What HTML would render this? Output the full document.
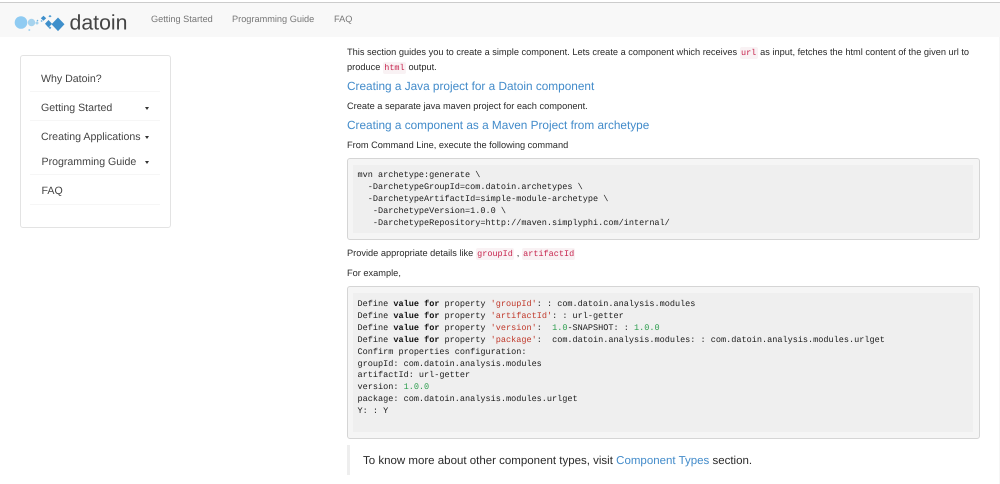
<!DOCTYPE html>
<html><head><meta charset="utf-8"><style>
html,body{margin:0;padding:0;background:#fff;width:1000px;height:484px;overflow:hidden}
body{position:relative;font-family:"Liberation Sans",sans-serif;color:#2a2a2a;text-rendering:geometricPrecision;filter:blur(.3px)}
.t{position:absolute;white-space:pre;font-size:9.24px;line-height:14px}
.n{color:#777;font-size:9.2px}
.s{color:#444;font-size:10.6px}
.h{color:#428bca;font-size:11.8px;line-height:16px}
code{font-family:"Liberation Mono",monospace;font-size:8.5px;color:#c7254e;background:#f9f2f4;padding:1px 1.3px;border-radius:2px}
pre{position:absolute;margin:0;font-family:"Liberation Mono",monospace;font-size:8.54px;line-height:11.9px;color:#1c1c1c}
.box{position:absolute;background:#f5f5f5;border:1px solid #d5d5d5;border-radius:3px;box-sizing:border-box}
.in{position:absolute;background:#efefef}
.k{font-weight:bold;color:#111}.r{color:#c0392b}.g{color:#2e9e4f}
.c{position:absolute;width:0;height:0;border-left:2.5px solid transparent;border-right:2.5px solid transparent;border-top:3px solid #333}
.l{position:absolute;height:1px;background:#f6f6f6;left:30px;width:130px}
</style></head><body>
<div style="position:absolute;left:0;top:0;width:1000px;height:3px;background:#fff;border-bottom:1px solid #ccc;box-sizing:border-box"></div>
<div style="position:absolute;left:0;top:3px;width:1000px;height:34px;background:#f8f8f8"></div>
<svg style="position:absolute;left:0;top:0" width="130" height="40" viewBox="0 0 130 40">
<circle cx="21" cy="22.500" r="6.300" fill="#8fcbf2"/><circle cx="31.500" cy="22.500" r="3.700" fill="#a6d3ee"/><circle cx="37" cy="23" r="1.500" fill="#a6d3ee"/><circle cx="29.300" cy="30" r="1" fill="#a6d3ee"/><circle cx="37.500" cy="20.500" r=".8" fill="#6fb2de"/><circle cx="41.600" cy="21" r=".9" fill="#6fb2de"/>
<path d="M58 17.500l6.500 6.800-6.500 6.800-6.500-6.800z" fill="#3e8fcb"/><path d="M48.500 20l3.500 3.800-3.500 3.800-3.500-3.800z" fill="#3e8fcb"/><path d="M43.500 15.700l2.700 2.500-2.700 2.500-2.700-2.500z" fill="#3e8fcb"/><path d="M50 15l1.600 1.200-1.600 1.200-1.600-1.200z" fill="#4a98d0"/><path d="M50 26.500l1.300 1.300-1.300 1.300-1.300-1.300z" fill="#4a98d0"/>
<text x="69.500" y="29.500" font-family="Liberation Sans" font-size="21" fill="#444" textLength="58" lengthAdjust="spacingAndGlyphs">datoin</text></svg>
<div class="t n" style="left:151px;top:12px">Getting Started</div>
<div class="t n" style="left:232px;top:12px">Programming Guide</div>
<div class="t n" style="left:334px;top:12px">FAQ</div>
<div style="position:absolute;left:20px;top:55px;width:151px;height:173px;border:1px solid #e3e3e3;border-radius:3px;box-sizing:border-box;background:#fff"></div>
<div class="t s" style="left:41px;top:72px">Why Datoin?</div><div class="l" style="top:91px"></div>
<div class="t s" style="left:41px;top:101px">Getting Started</div><div class="c" style="left:145px;top:107px"></div><div class="l" style="top:120px"></div>
<div class="t s" style="left:41px;top:130px">Creating Applications</div><div class="c" style="left:145px;top:136px"></div>
<div class="t s" style="left:41.500px;top:155px">Programming Guide</div><div class="c" style="left:144.500px;top:161px"></div><div class="l" style="top:174px"></div>
<div class="t s" style="left:41.500px;top:184px">FAQ</div><div class="l" style="top:204px"></div>
<div class="t" style="left:347px;top:45px">This section guides you to create a simple component. Lets create a component which receives <code>url</code> as input, fetches the html content of the given url to</div>
<div class="t" style="left:347px;top:59.500px">produce <code>html</code> output.</div>
<div class="t h" style="left:347px;top:78px">Creating a Java project for a Datoin component</div>
<div class="t" style="left:347px;top:99px">Create a separate java maven project for each component.</div>
<div class="t h" style="left:347px;top:117px">Creating a component as a Maven Project from archetype</div>
<div class="t" style="left:347px;top:138px">From Command Line, execute the following command</div>
<div class="box" style="left:347px;top:158px;width:633px;height:82px"></div><div class="in" style="left:353px;top:165px;width:620px;height:68px"></div>
<pre style="left:357.500px;top:170px">mvn archetype:generate \
  -DarchetypeGroupId=com.datoin.archetypes \
  -DarchetypeArtifactId=simple-module-archetype \
   -DarchetypeVersion=1.0.0 \
   -DarchetypeRepository=http://maven.simplyphi.com/internal/</pre>
<div class="t" style="left:347px;top:246px">Provide appropriate details like <code>groupId</code> , <code>artifactId</code></div>
<div class="t" style="left:347px;top:266px">For example,</div>
<div class="box" style="left:347px;top:286px;width:633px;height:153px"></div><div class="in" style="left:353px;top:293px;width:620px;height:139px"></div>
<pre style="left:357.500px;top:299px">Define <span class="k">value</span> <span class="k">for</span> property <span class="r">'groupId'</span>: : com.datoin.analysis.modules
Define <span class="k">value</span> <span class="k">for</span> property <span class="r">'artifactId'</span>: : url-getter
Define <span class="k">value</span> <span class="k">for</span> property <span class="r">'version'</span>:  <span class="g">1.0</span>-SNAPSHOT: : <span class="g">1.0.0</span>
Define <span class="k">value</span> <span class="k">for</span> property <span class="r">'package'</span>:  com.datoin.analysis.modules: : com.datoin.analysis.modules.urlget
Confirm properties configuration:
groupId: com.datoin.analysis.modules
artifactId: url-getter
version: <span class="g">1.0.0</span>
package: com.datoin.analysis.modules.urlget
Y: : Y</pre>
<div style="position:absolute;left:347px;top:445px;width:3px;height:30px;background:#eee"></div>
<div class="t" style="left:363px;top:453px;font-size:11.500px;line-height:16px">To know more about other component types, visit <span style="color:#428bca">Component Types</span> section.</div>
<div style="position:absolute;left:999px;top:37px;width:1px;height:447px;background:#f6f6f6"></div>
</body></html>
